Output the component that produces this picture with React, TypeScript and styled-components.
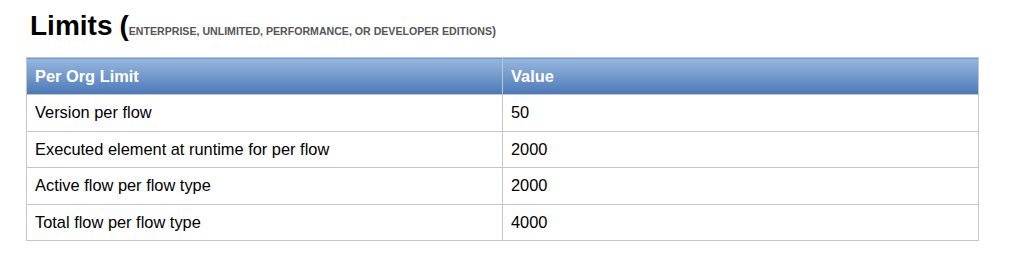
import React from "react";
import styled, { createGlobalStyle } from "styled-components";

const Global = createGlobalStyle`
  html, body { margin: 0; padding: 0; background: #fff; }
  body { font-family: "Liberation Sans", Arial, sans-serif; color: #000; }
`;

const Page = styled.div`
  padding: 8px 0 0 26px;
  width: 953px;
`;

const Title = styled.h1`
  margin: 0 0 0 4px;
  font-size: 28px;
  line-height: 36px;
  font-weight: bold;
  display: flex;
  align-items: baseline;
`;

const Paren = styled.span`
  font-size: 28px;
  font-weight: bold;
  margin-left: 7px;
`;

const Editions = styled.span`
  font-size: 10.6px;
  font-weight: bold;
  color: #555;
`;

const SmallParen = styled.span`
  font-size: 12px;
  font-weight: bold;
  color: #555;
`;

const Table = styled.table`
  margin-top: 8px;
  width: 953px;
  border-collapse: collapse;
  border: 1px solid #c6c6c6;
`;

const HeadCell = styled.th<{ w?: string }>`
  height: 36px;
  padding: 0 0 0 8px;
  text-align: left;
  font-size: 16.4px;
  font-weight: bold;
  color: #fff;
  background: linear-gradient(to bottom, #96b7de 0%, #7399cb 50%, #4a78b6 100%);
  border-right: 1px solid #b8c8dc;
  border-bottom: 1px solid #c6c6c6;
  width: ${(p) => p.w || "auto"};
  &:last-child { border-right: none; }
`;

const Cell = styled.td`
  height: 35.6px;
  padding: 0 0 0 8px;
  font-size: 16.4px;
  border-top: 1px solid #c6c6c6;
  border-right: 1px solid #c6c6c6;
  &:last-child { border-right: none; }
`;

const rows: [string, string][] = [
  ["Version per flow", "50"],
  ["Executed element at runtime for per flow", "2000"],
  ["Active flow per flow type", "2000"],
  ["Total flow per flow type", "4000"],
];

export default function App() {
  return (
    <>
      <Global />
      <Page>
        <Title>
          Limits<Paren>(</Paren>
          <Editions>ENTERPRISE, UNLIMITED, PERFORMANCE, OR DEVELOPER EDITIONS</Editions>
          <SmallParen>)</SmallParen>
        </Title>
        <Table>
          <thead>
            <tr>
              <HeadCell w="467px">Per Org Limit</HeadCell>
              <HeadCell>Value</HeadCell>
            </tr>
          </thead>
          <tbody>
            {rows.map(([k, v]) => (
              <tr key={k}>
                <Cell>{k}</Cell>
                <Cell>{v}</Cell>
              </tr>
            ))}
          </tbody>
        </Table>
      </Page>
    </>
  );
}
